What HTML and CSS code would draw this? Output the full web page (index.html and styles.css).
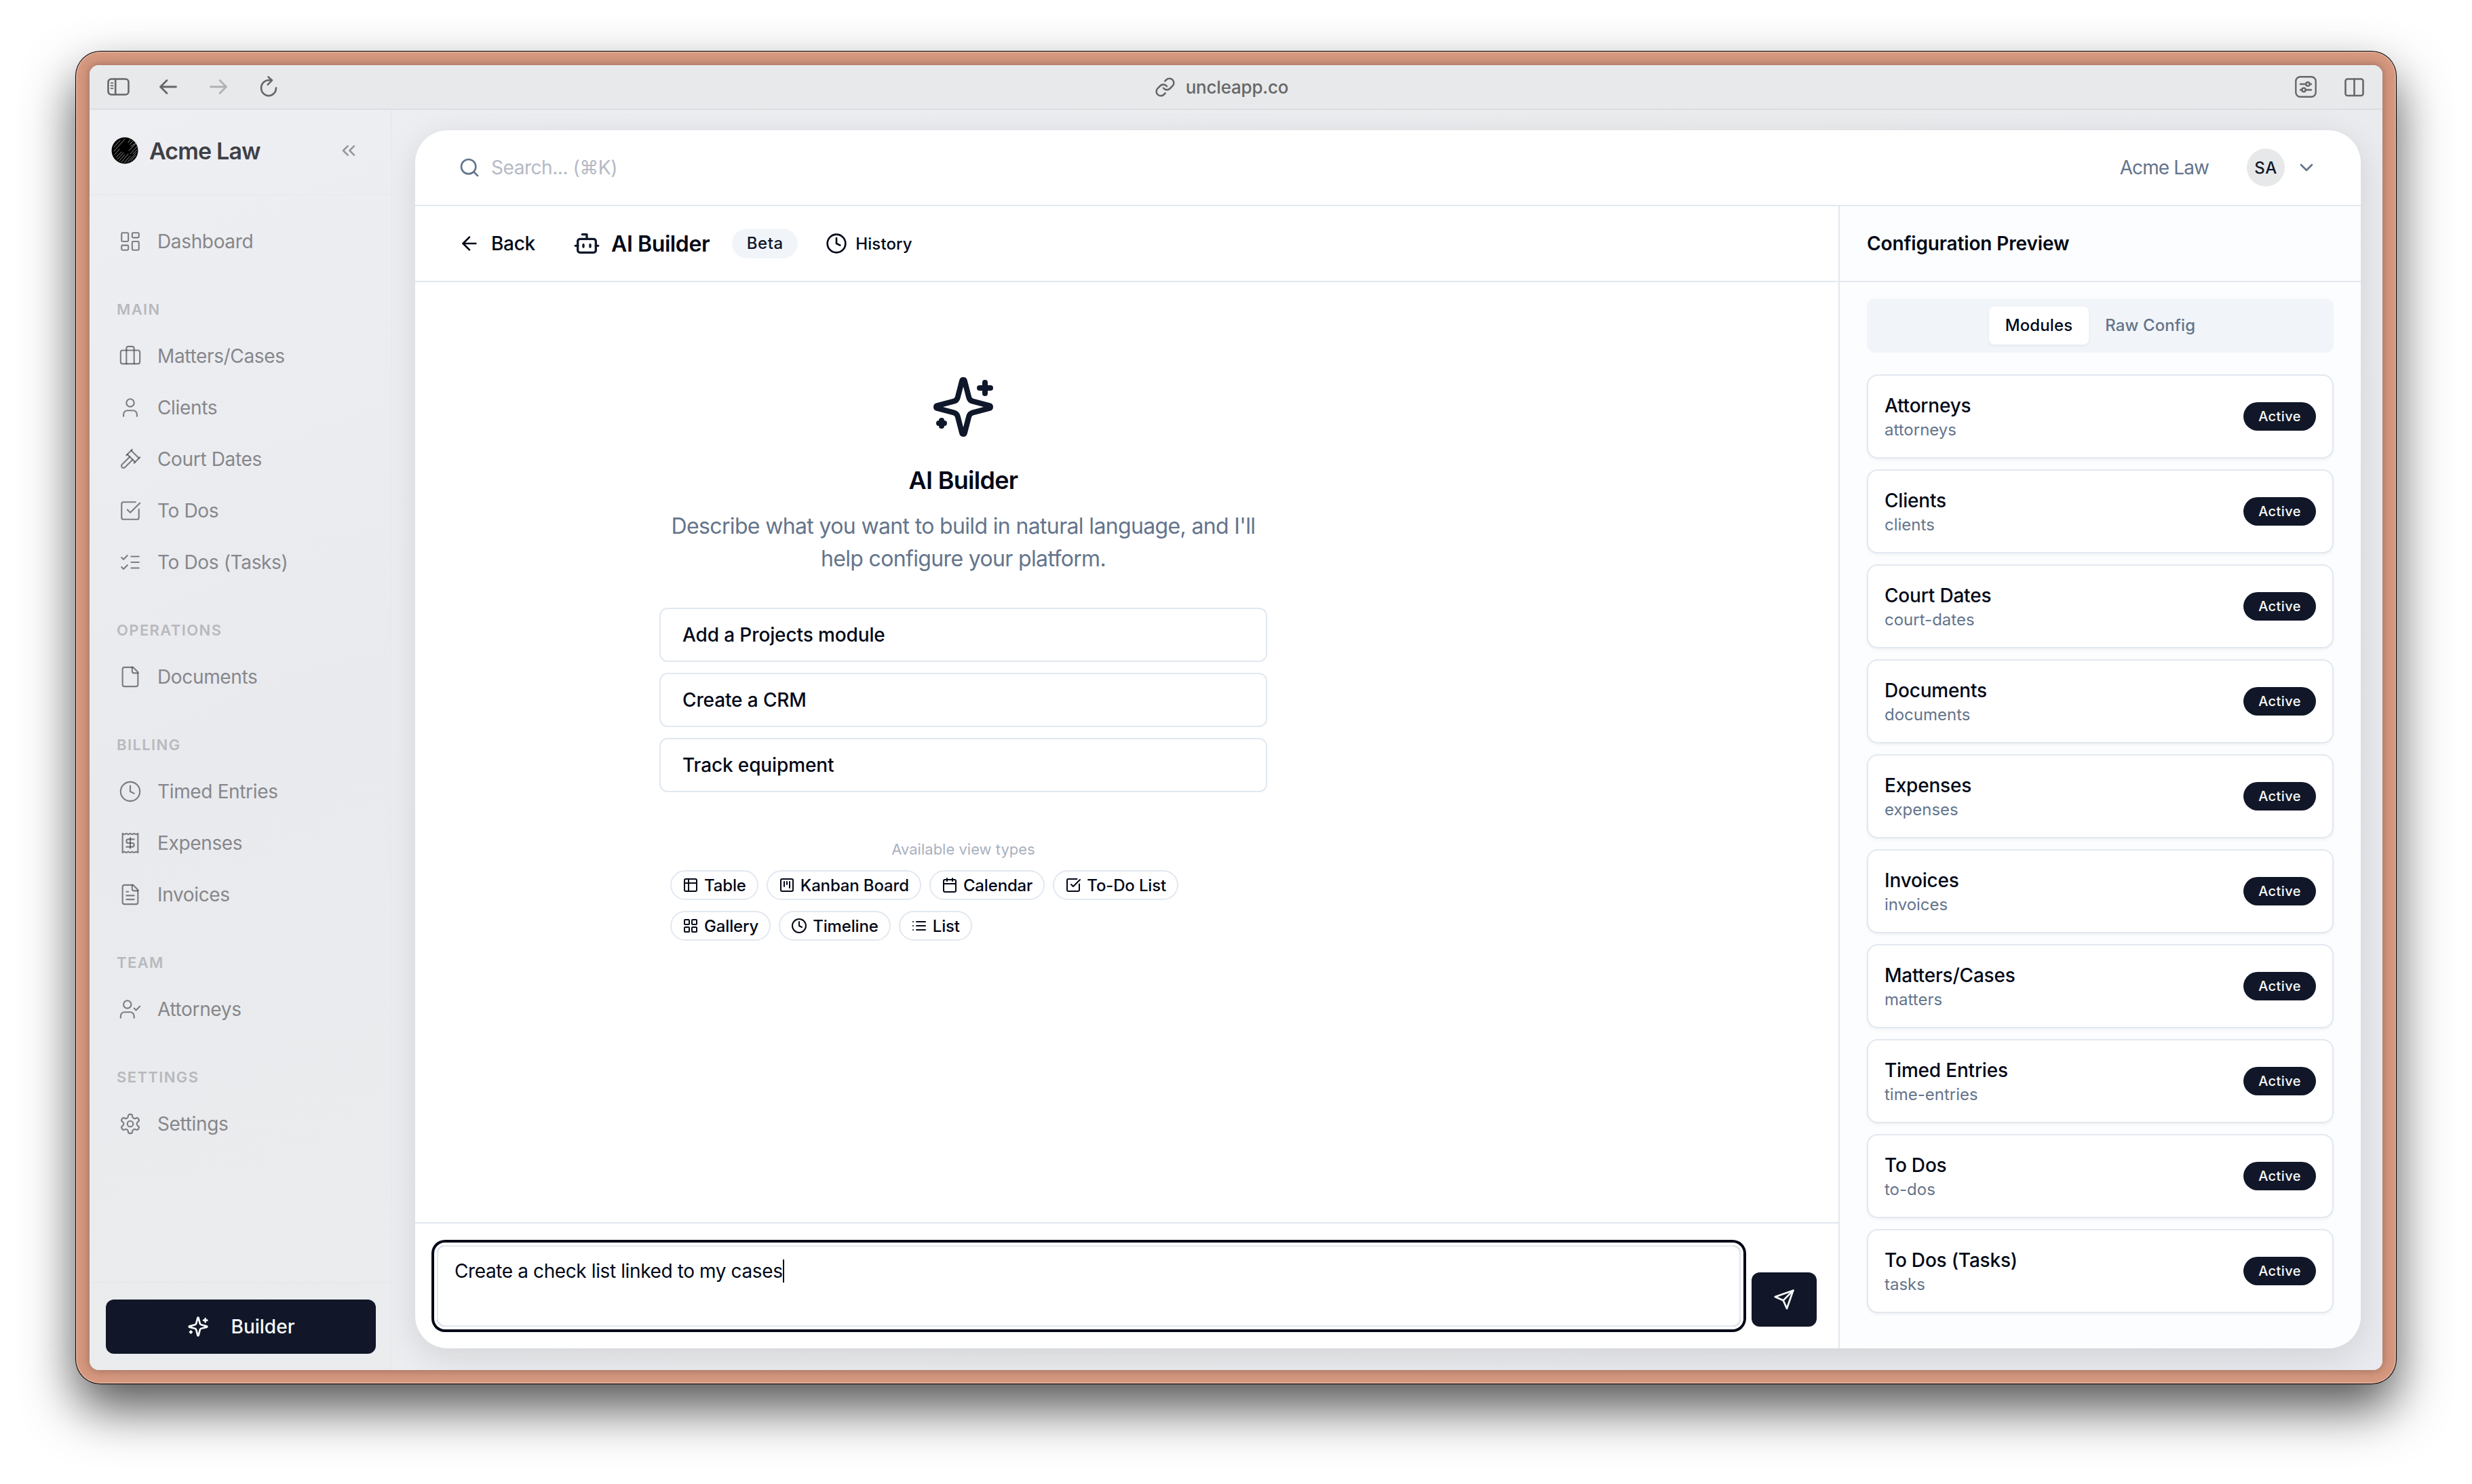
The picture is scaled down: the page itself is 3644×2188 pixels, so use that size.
FILE: index.html
```
<!DOCTYPE html>
<html lang="en">
<head>
    <meta charset="UTF-8">
    <meta name="viewport" content="width=device-width, initial-scale=1.0">
    <title>Acme Law - AI Builder</title>
    <link rel="stylesheet" href="styles.css">
</head>
<body>
    <svg class="sprite">
        <symbol id="dashboard" viewBox="0 0 24 24"><rect width="7" height="9" x="3" y="3" rx="1"/><rect width="7" height="5" x="14" y="3" rx="1"/><rect width="7" height="9" x="14" y="12" rx="1"/><rect width="7" height="5" x="3" y="16" rx="1"/></symbol>
        <symbol id="briefcase" viewBox="0 0 24 24"><path d="M16 20V4a2 2 0 0 0-2-2h-4a2 2 0 0 0-2 2v16"/><rect width="20" height="14" x="2" y="6" rx="2"/></symbol>
        <symbol id="user" viewBox="0 0 24 24"><path d="M19 21v-2a4 4 0 0 0-4-4H9a4 4 0 0 0-4 4v2"/><circle cx="12" cy="7" r="4"/></symbol>
        <symbol id="gavel" viewBox="0 0 24 24"><path d="m14.5 12.5-8 8a2.119 2.119 0 1 1-3-3l8-8"/><path d="m16 16 6-6"/><path d="m8 8 6-6"/><path d="m9 7 8 8"/><path d="m21 11-8-8"/></symbol>
        <symbol id="check-square" viewBox="0 0 24 24"><path d="M21 10.5V19a2 2 0 0 1-2 2H5a2 2 0 0 1-2-2V5a2 2 0 0 1 2-2h12.5"/><path d="m9 11 3 3L22 4"/></symbol>
        <symbol id="list-checks" viewBox="0 0 24 24"><path d="m3 17 2 2 4-4"/><path d="m3 7 2 2 4-4"/><path d="M13 6h8"/><path d="M13 12h8"/><path d="M13 18h8"/></symbol>
        <symbol id="file" viewBox="0 0 24 24"><path d="M15 2H6a2 2 0 0 0-2 2v16a2 2 0 0 0 2 2h12a2 2 0 0 0 2-2V7Z"/><path d="M14 2v4a2 2 0 0 0 2 2h4"/></symbol>
        <symbol id="file-text" viewBox="0 0 24 24"><path d="M15 2H6a2 2 0 0 0-2 2v16a2 2 0 0 0 2 2h12a2 2 0 0 0 2-2V7Z"/><path d="M14 2v4a2 2 0 0 0 2 2h4"/><path d="M10 9H8"/><path d="M16 13H8"/><path d="M16 17H8"/></symbol>
        <symbol id="clock" viewBox="0 0 24 24"><circle cx="12" cy="12" r="10"/><path d="M12 6v6l4 2"/></symbol>
        <symbol id="receipt" viewBox="0 0 24 24"><path d="M4 2v20l2-1 2 1 2-1 2 1 2-1 2 1 2-1 2 1V2l-2 1-2-1-2 1-2-1-2 1-2-1-2 1Z"/><path d="M16 8h-6a2 2 0 1 0 0 4h4a2 2 0 1 1 0 4H8"/><path d="M12 17.5v-11"/></symbol>
        <symbol id="user-check" viewBox="0 0 24 24"><path d="m16 11 2 2 4-4"/><path d="M16 21v-2a4 4 0 0 0-4-4H6a4 4 0 0 0-4 4v2"/><circle cx="9" cy="7" r="4"/></symbol>
        <symbol id="settings" viewBox="0 0 24 24"><path d="M12.22 2h-.44a2 2 0 0 0-2 2v.18a2 2 0 0 1-1 1.73l-.43.25a2 2 0 0 1-2 0l-.15-.08a2 2 0 0 0-2.73.73l-.22.38a2 2 0 0 0 .73 2.73l.15.1a2 2 0 0 1 1 1.72v.51a2 2 0 0 1-1 1.74l-.15.09a2 2 0 0 0-.73 2.73l.22.38a2 2 0 0 0 2.73.73l.15-.08a2 2 0 0 1 2 0l.43.25a2 2 0 0 1 1 1.73V20a2 2 0 0 0 2 2h.44a2 2 0 0 0 2-2v-.18a2 2 0 0 1 1-1.73l.43-.25a2 2 0 0 1 2 0l.15.08a2 2 0 0 0 2.73-.73l.22-.39a2 2 0 0 0-.73-2.73l-.15-.08a2 2 0 0 1-1-1.74v-.5a2 2 0 0 1 1-1.74l.15-.09a2 2 0 0 0 .73-2.73l-.22-.38a2 2 0 0 0-2.73-.73l-.15.08a2 2 0 0 1-2 0l-.43-.25a2 2 0 0 1-1-1.73V4a2 2 0 0 0-2-2z"/><circle cx="12" cy="12" r="3"/></symbol>
        <symbol id="sparkles" viewBox="0 0 24 24"><path d="M9.937 15.5A2 2 0 0 0 8.5 14.063l-6.135-1.582a.5.5 0 0 1 0-.962L8.5 9.936A2 2 0 0 0 9.937 8.5l1.582-6.135a.5.5 0 0 1 .963 0L14.063 8.5A2 2 0 0 0 15.5 9.937l6.135 1.581a.5.5 0 0 1 0 .964L15.5 14.063a2 2 0 0 0-1.437 1.437l-1.582 6.135a.5.5 0 0 1-.963 0z"/><path d="M20 3v4"/><path d="M22 5h-4"/><path d="M4 17v2"/><path d="M5 18H3"/></symbol>
        <symbol id="search" viewBox="0 0 24 24"><circle cx="11" cy="11" r="8"/><path d="m21 21-4.3-4.3"/></symbol>
        <symbol id="arrow-left" viewBox="0 0 24 24"><path d="m12 19-7-7 7-7"/><path d="M19 12H5"/></symbol>
        <symbol id="bot" viewBox="0 0 24 24"><path d="M12 8V4H8"/><rect width="16" height="12" x="4" y="8" rx="2"/><path d="M2 14h2"/><path d="M20 14h2"/><path d="M15 13v2"/><path d="M9 13v2"/></symbol>
        <symbol id="chevron-down" viewBox="0 0 24 24"><path d="m6 9 6 6 6-6"/></symbol>
        <symbol id="chevrons-left" viewBox="0 0 24 24"><path d="m11 17-5-5 5-5"/><path d="m18 17-5-5 5-5"/></symbol>
        <symbol id="table" viewBox="0 0 24 24"><rect width="18" height="18" x="3" y="3" rx="2"/><path d="M3 9h18"/><path d="M9 3v18"/></symbol>
        <symbol id="kanban" viewBox="0 0 24 24"><rect width="18" height="18" x="3" y="3" rx="2"/><path d="M8 7v7"/><path d="M12 7v4"/><path d="M16 7v9"/></symbol>
        <symbol id="calendar" viewBox="0 0 24 24"><path d="M8 2v4"/><path d="M16 2v4"/><rect width="18" height="18" x="3" y="4" rx="2"/><path d="M3 10h18"/></symbol>
        <symbol id="grid" viewBox="0 0 24 24"><rect width="7" height="7" x="3" y="3" rx="1"/><rect width="7" height="7" x="14" y="3" rx="1"/><rect width="7" height="7" x="14" y="14" rx="1"/><rect width="7" height="7" x="3" y="14" rx="1"/></symbol>
        <symbol id="list" viewBox="0 0 24 24"><path d="M3 12h.01"/><path d="M3 18h.01"/><path d="M3 6h.01"/><path d="M8 12h13"/><path d="M8 18h13"/><path d="M8 6h13"/></symbol>
        <symbol id="send" viewBox="0 0 24 24"><path d="m22 2-7 20-4-9-9-4Z"/><path d="M22 2 11 13"/></symbol>
    </svg>

    <div class="window">
        <div class="browser">
            <div class="toolbar">
                <div class="toolbar-left">
                    <svg class="tool-sidebar" viewBox="0 0 33 26"><rect x="1.5" y="1.5" width="30" height="23" rx="4.5"/><path d="M12.2 2v22"/><path class="thin" d="M5.5 7.3h3M5.5 11.3h3M5.5 15.3h3"/></svg>
                    <svg class="tool-arrow" viewBox="0 0 26 22"><path d="M11 1.5 1.5 11l9.5 9.5M1.5 11h23"/></svg>
                    <svg class="tool-arrow disabled" viewBox="0 0 26 22"><path d="m15 1.5 9.5 9.5-9.5 9.5M24.5 11h-23"/></svg>
                    <svg class="tool-reload" viewBox="0 0 26 32"><path d="M24 17.5a11 11.5 0 1 1-11-11.3h5M12.5 1.5l5.5 4.9-6.3 6.4"/></svg>
                </div>
                <div class="address">
                    <svg class="tool-link" viewBox="0 0 24 24"><path d="M10 13a5 5 0 0 0 7.54.54l3-3a5 5 0 0 0-7.07-7.07l-1.72 1.71"/><path d="M14 11a5 5 0 0 0-7.54-.54l-3 3a5 5 0 0 0 7.07 7.07l1.71-1.71"/></svg>
                    <span>uncleapp.co</span>
                </div>
                <div class="toolbar-right">
                    <svg class="tool-sliders" viewBox="0 0 32 32"><rect x="1.3" y="1.3" width="29.4" height="29.4" rx="6.5"/><path d="M8 12h8M22 12h2M8 20.5h2M16 20.5h8"/><circle cx="19" cy="12" r="2.7"/><circle cx="13" cy="20.5" r="2.7"/></svg>
                    <svg class="tool-split" viewBox="0 0 29 29"><rect x="1.5" y="2.5" width="26" height="24.5" rx="3"/><path d="M14.5 2.5v24.500"/></svg>
                </div>
            </div>

            <div class="app">
                <aside class="sidebar">
                    <div class="brand">
                        <svg class="brand-logo" viewBox="0 0 40 40"><circle cx="20" cy="20" r="19.5"/><path d="M4 15 13 5M4 21 20 3M5 26 12 18M25 8l3-4M7 30l8-8M27 11l6-6M9 33l9-10M29 14l7-5M12 35l8-9M26 20l11-11M15 37l10-12M28 25l10-11M19 38l9-10M32 25l6-6M24 37l13-14M29 35l7-8"/></svg>
                        <span class="brand-name">Acme Law</span>
                        <svg class="collapse"><use href="#chevrons-left"/></svg>
                    </div>
                    <nav class="nav">
                        <a class="nav-item"><svg><use href="#dashboard"/></svg>Dashboard</a>
                        <h4>Main</h4>
                        <a class="nav-item"><svg><use href="#briefcase"/></svg>Matters/Cases</a>
                        <a class="nav-item"><svg><use href="#user"/></svg>Clients</a>
                        <a class="nav-item"><svg><use href="#gavel"/></svg>Court Dates</a>
                        <a class="nav-item"><svg><use href="#check-square"/></svg>To Dos</a>
                        <a class="nav-item"><svg><use href="#list-checks"/></svg>To Dos (Tasks)</a>
                        <h4>Operations</h4>
                        <a class="nav-item"><svg><use href="#file"/></svg>Documents</a>
                        <h4>Billing</h4>
                        <a class="nav-item"><svg><use href="#clock"/></svg>Timed Entries</a>
                        <a class="nav-item"><svg><use href="#receipt"/></svg>Expenses</a>
                        <a class="nav-item"><svg><use href="#file-text"/></svg>Invoices</a>
                        <h4>Team</h4>
                        <a class="nav-item"><svg><use href="#user-check"/></svg>Attorneys</a>
                        <h4>Settings</h4>
                        <a class="nav-item"><svg><use href="#settings"/></svg>Settings</a>
                    </nav>
                    <div class="sidebar-footer">
                        <button class="builder-button"><svg class="icon"><use href="#sparkles"/></svg>Builder</button>
                    </div>
                </aside>

                <main class="main">
                    <div class="panel">
                        <header class="topbar">
                            <svg class="icon muted"><use href="#search"/></svg>
                            <span class="search">Search... (⌘K)</span>
                            <span class="org">Acme Law</span>
                            <span class="avatar">SA</span>
                            <svg class="icon muted"><use href="#chevron-down"/></svg>
                        </header>

                        <div class="columns">
                            <section class="chat">
                                <div class="chat-header">
                                    <a class="back"><svg class="icon"><use href="#arrow-left"/></svg>Back</a>
                                    <h1><svg class="icon-bot"><use href="#bot"/></svg>AI Builder</h1>
                                    <span class="beta">Beta</span>
                                    <a class="history"><svg class="icon"><use href="#clock"/></svg>History</a>
                                </div>

                                <div class="chat-body">
                                    <div class="intro">
                                        <svg class="intro-icon"><use href="#sparkles"/></svg>
                                        <h2>AI Builder</h2>
                                        <p>Describe what you want to build in natural language, and I'll help configure your platform.</p>
                                        <div class="suggestions">
                                            <button>Add a Projects module</button>
                                            <button>Create a CRM</button>
                                            <button>Track equipment</button>
                                        </div>
                                        <div class="views-title">Available view types</div>
                                        <div class="views">
                                            <span class="chip"><svg><use href="#table"/></svg>Table</span>
                                            <span class="chip"><svg><use href="#kanban"/></svg>Kanban Board</span>
                                            <span class="chip"><svg><use href="#calendar"/></svg>Calendar</span>
                                            <span class="chip"><svg><use href="#check-square"/></svg>To-Do List</span>
                                            <span class="chip"><svg><use href="#grid"/></svg>Gallery</span>
                                            <span class="chip"><svg><use href="#clock"/></svg>Timeline</span>
                                            <span class="chip"><svg><use href="#list"/></svg>List</span>
                                        </div>
                                    </div>
                                </div>

                                <div class="composer">
                                    <div class="prompt">Create a check list linked to my cases<span class="caret"></span></div>
                                    <button class="send"><svg class="icon"><use href="#send"/></svg></button>
                                </div>
                            </section>

                            <section class="preview">
                                <div class="preview-header">Configuration Preview</div>
                                <div class="preview-body">
                                    <div class="tabs">
                                        <span class="tab active">Modules</span>
                                        <span class="tab">Raw Config</span>
                                    </div>
                                    <div class="modules">
                                        <div class="module"><div><h3>Attorneys</h3><p>attorneys</p></div><span class="badge">Active</span></div>
                                        <div class="module"><div><h3>Clients</h3><p>clients</p></div><span class="badge">Active</span></div>
                                        <div class="module"><div><h3>Court Dates</h3><p>court-dates</p></div><span class="badge">Active</span></div>
                                        <div class="module"><div><h3>Documents</h3><p>documents</p></div><span class="badge">Active</span></div>
                                        <div class="module"><div><h3>Expenses</h3><p>expenses</p></div><span class="badge">Active</span></div>
                                        <div class="module"><div><h3>Invoices</h3><p>invoices</p></div><span class="badge">Active</span></div>
                                        <div class="module"><div><h3>Matters/Cases</h3><p>matters</p></div><span class="badge">Active</span></div>
                                        <div class="module"><div><h3>Timed Entries</h3><p>time-entries</p></div><span class="badge">Active</span></div>
                                        <div class="module"><div><h3>To Dos</h3><p>to-dos</p></div><span class="badge">Active</span></div>
                                        <div class="module"><div><h3>To Dos (Tasks)</h3><p>tasks</p></div><span class="badge">Active</span></div>
                                    </div>
                                </div>
                            </section>
                        </div>
                    </div>
                </main>
            </div>
        </div>
    </div>
</body>
</html>
```
FILE: styles.css
```
* {
    box-sizing: border-box;
}

body {
    margin: 0;
    height: 2188px;
    padding: 76px 112px 148px;
    overflow: hidden;
    background-color: #fff;
    font-family: Inter, "Liberation Sans", sans-serif;
    font-size: 28px;
    color: #020817;
}

h1, h2, h3, h4, p {
    margin: 0;
    font-weight: inherit;
}

button {
    font: inherit;
    color: inherit;
    border: none;
    cursor: pointer;
}

svg {
    display: block;
    flex: none;
    fill: none;
    stroke: currentColor;
    stroke-width: 2;
    stroke-linecap: round;
    stroke-linejoin: round;
}

.sprite {
    position: absolute;
    width: 0;
    height: 0;
}

.icon {
    width: 32px;
    height: 32px;
}

.muted {
    color: #64748b;
}

/* window frame */
.window {
    height: 100%;
    padding: 20px;
    border-radius: 36px;
    background-color: #d5977e;
    box-shadow: inset 0 0 0 2px rgba(255, 255, 255, 0.2), 0 0 0 1px #000, 0 36px 76px rgba(0, 0, 0, 0.68);
}

.browser {
    display: flex;
    flex-direction: column;
    height: 100%;
    border-radius: 14px;
    overflow: hidden;
    background-color: #e9eaec;
    box-shadow: 0 0 14px rgba(0, 0, 0, 0.3);
}

.toolbar {
    display: grid;
    grid-template-columns: 1fr auto 1fr;
    align-items: center;
    height: 66px;
    flex: none;
    padding: 0 27px 0 26px;
    border-bottom: 2px solid #dddee1;
    background-color: #e8e9eb;
    color: #666768;
}

.toolbar-left {
    display: flex;
    align-items: center;
}

.tool-sidebar {
    width: 33px;
    height: 26px;
    margin-right: 44px;
    stroke-width: 2.6;
}

.thin {
    stroke-width: 1.8;
}

.tool-arrow {
    width: 26px;
    height: 22px;
    margin-right: 48px;
    stroke-width: 2.8;
}

.disabled {
    color: #b0b1b3;
}

.tool-reload {
    width: 26px;
    height: 32px;
    stroke-width: 2.6;
}

.address {
    display: flex;
    align-items: center;
    gap: 15px;
    padding-right: 42px;
    font-size: 26px;
    font-weight: 500;
    letter-spacing: -0.2px;
}

.tool-link {
    width: 31px;
    height: 31px;
}

.toolbar-right {
    display: flex;
    justify-content: flex-end;
    align-items: center;
    gap: 41px;
}

.tool-sliders {
    width: 32px;
    height: 32px;
    stroke-width: 2.4;
}

.tool-split {
    width: 29px;
    height: 29px;
    stroke-width: 2.6;
}

.app {
    display: flex;
    flex: 1;
    min-height: 0;
}

/* sidebar */
.sidebar {
    position: relative;
    z-index: 1;
    display: flex;
    flex-direction: column;
    width: 446px;
    flex: none;
    border-right: 2px solid #e8e9ee;
    background: linear-gradient(160deg, #eeeff3 0%, #e9eaee 50%, #ebeced 100%);
}

.brand {
    display: flex;
    align-items: center;
    height: 126px;
    flex: none;
    padding: 0 48px 4px 32px;
    border-bottom: 2px solid #e8eaef;
}

.brand-logo {
    width: 40px;
    height: 40px;
    fill: #000;
    stroke: none;
}

.brand-logo path {
    fill: none;
    stroke: #9a9a9a;
    stroke-width: 0.9;
}

.brand-name {
    flex: 1;
    margin-left: 16px;
    font-size: 34px;
    font-weight: 600;
    letter-spacing: -0.85px;
    color: #3f4046;
}

.collapse {
    width: 32px;
    height: 32px;
    margin-right: -2px;
    color: #97989c;
}

.nav {
    flex: 1;
    padding: 32px 24px 0;
}

.nav h4 {
    height: 32px;
    margin: 48px 0 17px 16px;
    font-size: 22px;
    font-weight: 600;
    line-height: 32px;
    letter-spacing: 1.4px;
    text-transform: uppercase;
    color: #b8b9bd;
}

.nav-item {
    display: flex;
    align-items: center;
    gap: 23px;
    height: 72px;
    padding-left: 19px;
    letter-spacing: -0.35px;
    color: #86878b;
}

.nav-item + .nav-item {
    margin-top: 4px;
}

.nav-item svg {
    width: 34px;
    height: 34px;
    stroke-width: 1.5;
    color: rgba(50, 51, 57, 0.6);
}

.sidebar-footer {
    padding: 24px 22px 24px 24px;
    border-top: 2px solid #e6e8ee;
}

.builder-button {
    display: flex;
    align-items: center;
    justify-content: center;
    gap: 33px;
    width: 398px;
    height: 80px;
    border-radius: 12px;
    background-color: #111728;
    color: #f8fafc;
    font-weight: 450;
}

/* main panel */
.main {
    flex: 1;
    min-width: 0;
    padding: 30px 32px 32px 34px;
    background: linear-gradient(120deg, #eceef2 0%, #ebecee 50%, #e8eaef 100%);
}

.panel {
    display: flex;
    flex-direction: column;
    height: 100%;
    border-radius: 48px;
    overflow: hidden;
    background-color: #fff;
    box-shadow: 0 12px 50px rgba(0, 0, 0, 0.11);
}

.topbar {
    display: flex;
    align-items: center;
    height: 112px;
    flex: none;
    padding: 0 64px;
    border-bottom: 2px solid #e2e8f0;
}

.search {
    flex: 1;
    margin-left: 16px;
    letter-spacing: -0.45px;
    color: #b4bac6;
}

.org {
    letter-spacing: -0.9px;
    color: #64748b;
}

.avatar {
    display: flex;
    align-items: center;
    justify-content: center;
    width: 56px;
    height: 56px;
    margin: 0 16px 0 56px;
    border-radius: 50%;
    background-color: #e7e8ea;
    font-size: 24px;
    font-weight: 550;
    letter-spacing: 0.5px;
    color: #0f172a;
}

.columns {
    display: flex;
    flex: 1;
    min-height: 0;
}

.chat {
    display: flex;
    flex-direction: column;
    flex: 1;
    min-width: 0;
}

.chat-header {
    display: flex;
    align-items: center;
    height: 112px;
    flex: none;
    padding-left: 64px;
    border-bottom: 2px solid #e2e8f0;
}

.back {
    display: flex;
    align-items: center;
    gap: 16px;
    width: 169px;
    font-weight: 450;
    letter-spacing: -0.3px;
}

.chat-header h1 {
    display: flex;
    align-items: center;
    gap: 16px;
    margin-right: 33px;
    font-size: 32px;
    font-weight: 600;
    letter-spacing: -0.4px;
}

.icon-bot {
    width: 40px;
    height: 40px;
    color: #0f172a;
}

.beta {
    width: 97px;
    height: 44px;
    border-radius: 22px;
    background-color: #f1f5f9;
    font-size: 24px;
    font-weight: 550;
    line-height: 44px;
    text-align: center;
    letter-spacing: 0.5px;
    color: #0f172a;
}

.history {
    display: flex;
    align-items: center;
    gap: 12px;
    margin-left: 41px;
    font-size: 24px;
    font-weight: 450;
    letter-spacing: 0.1px;
}

.chat-body {
    flex: 1;
}

.intro {
    width: 896px;
    margin: 136px 0 0 360px;
    text-align: center;
}

.intro-icon {
    width: 96px;
    height: 96px;
    margin: 0 auto;
    color: #0f172a;
}

.intro h2 {
    margin-top: 32px;
    font-size: 36px;
    font-weight: 600;
    line-height: 56px;
    letter-spacing: -0.7px;
}

.intro p {
    margin-top: 16px;
    font-size: 32px;
    line-height: 48px;
    letter-spacing: -0.65px;
    color: #64748b;
}

.suggestions {
    display: flex;
    flex-direction: column;
    gap: 16px;
    margin-top: 48px;
}

.suggestions button {
    height: 80px;
    padding: 0 32px;
    border: 2px solid #e2e8f0;
    border-radius: 12px;
    background-color: #fff;
    font-weight: 450;
    letter-spacing: -0.12px;
    text-align: left;
}

.views-title {
    margin: 68px 0 15px;
    font-size: 22px;
    line-height: 32px;
    color: #a9b1bf;
}

.views {
    display: flex;
    flex-wrap: wrap;
    gap: 16px 12px;
    padding: 0 16px;
}

.chip {
    display: flex;
    align-items: center;
    gap: 8px;
    height: 44px;
    padding: 0 16px;
    border: 2px solid #e2e8f0;
    border-radius: 22px;
    font-size: 24px;
    font-weight: 450;
    letter-spacing: -0.15px;
}

.chip svg {
    width: 24px;
    height: 24px;
}

.composer {
    display: flex;
    align-items: flex-end;
    gap: 16px;
    height: 186px;
    flex: none;
    padding: 32px;
    border-top: 2px solid #e2e8f0;
}

.prompt {
    display: flex;
    flex: 1;
    height: 120px;
    padding: 16px 24px;
    border: 2px solid #e2e8f0;
    border-radius: 12px;
    line-height: 40px;
    letter-spacing: -0.39px;
    box-shadow: 0 0 0 4px #fff, 0 0 0 8px #020817;
}

.caret {
    width: 2px;
    height: 34px;
    margin-top: 3px;
    background-color: #020817;
}

.send {
    display: flex;
    align-items: center;
    justify-content: center;
    width: 96px;
    height: 80px;
    border-radius: 12px;
    background-color: #111728;
    color: #f8fafc;
}

/* configuration preview */
.preview {
    width: 770px;
    flex: none;
    border-left: 2px solid #e2e8f0;
    background-color: #fcfdfe;
}

.preview-header {
    height: 112px;
    padding-left: 40px;
    border-bottom: 2px solid #e2e8f0;
    font-weight: 600;
    line-height: 110px;
    letter-spacing: -0.14px;
}

.preview-body {
    padding: 24px 40px;
}

.tabs {
    display: flex;
    align-items: center;
    justify-content: center;
    height: 80px;
    border-radius: 12px;
    background-color: #f1f5f9;
    font-size: 24px;
    font-weight: 450;
    letter-spacing: 0.1px;
    color: #64748b;
}

.tab {
    height: 56px;
    padding: 0 24px;
    border-radius: 8px;
    line-height: 56px;
}

.tab.active {
    background-color: #fff;
    color: #020817;
    box-shadow: 0 2px 4px rgba(0, 0, 0, 0.05);
}

.modules {
    display: flex;
    flex-direction: column;
    gap: 16px;
    margin-top: 32px;
}

.module {
    display: flex;
    align-items: center;
    justify-content: space-between;
    height: 124px;
    padding: 0 24px;
    border: 2px solid #e2e8f0;
    border-radius: 16px;
    background-color: #fff;
    box-shadow: 0 2px 4px rgba(0, 0, 0, 0.05);
}

.module h3 {
    font-size: 28px;
    font-weight: 480;
    line-height: 40px;
    letter-spacing: -0.2px;
}

.module p {
    font-size: 24px;
    line-height: 32px;
    color: #64748b;
}

.badge {
    width: 107px;
    height: 42px;
    border-radius: 21px;
    background-color: #111728;
    font-size: 20px;
    font-weight: 550;
    line-height: 42px;
    letter-spacing: 0.4px;
    text-align: center;
    color: #f8fafc;
}
```
